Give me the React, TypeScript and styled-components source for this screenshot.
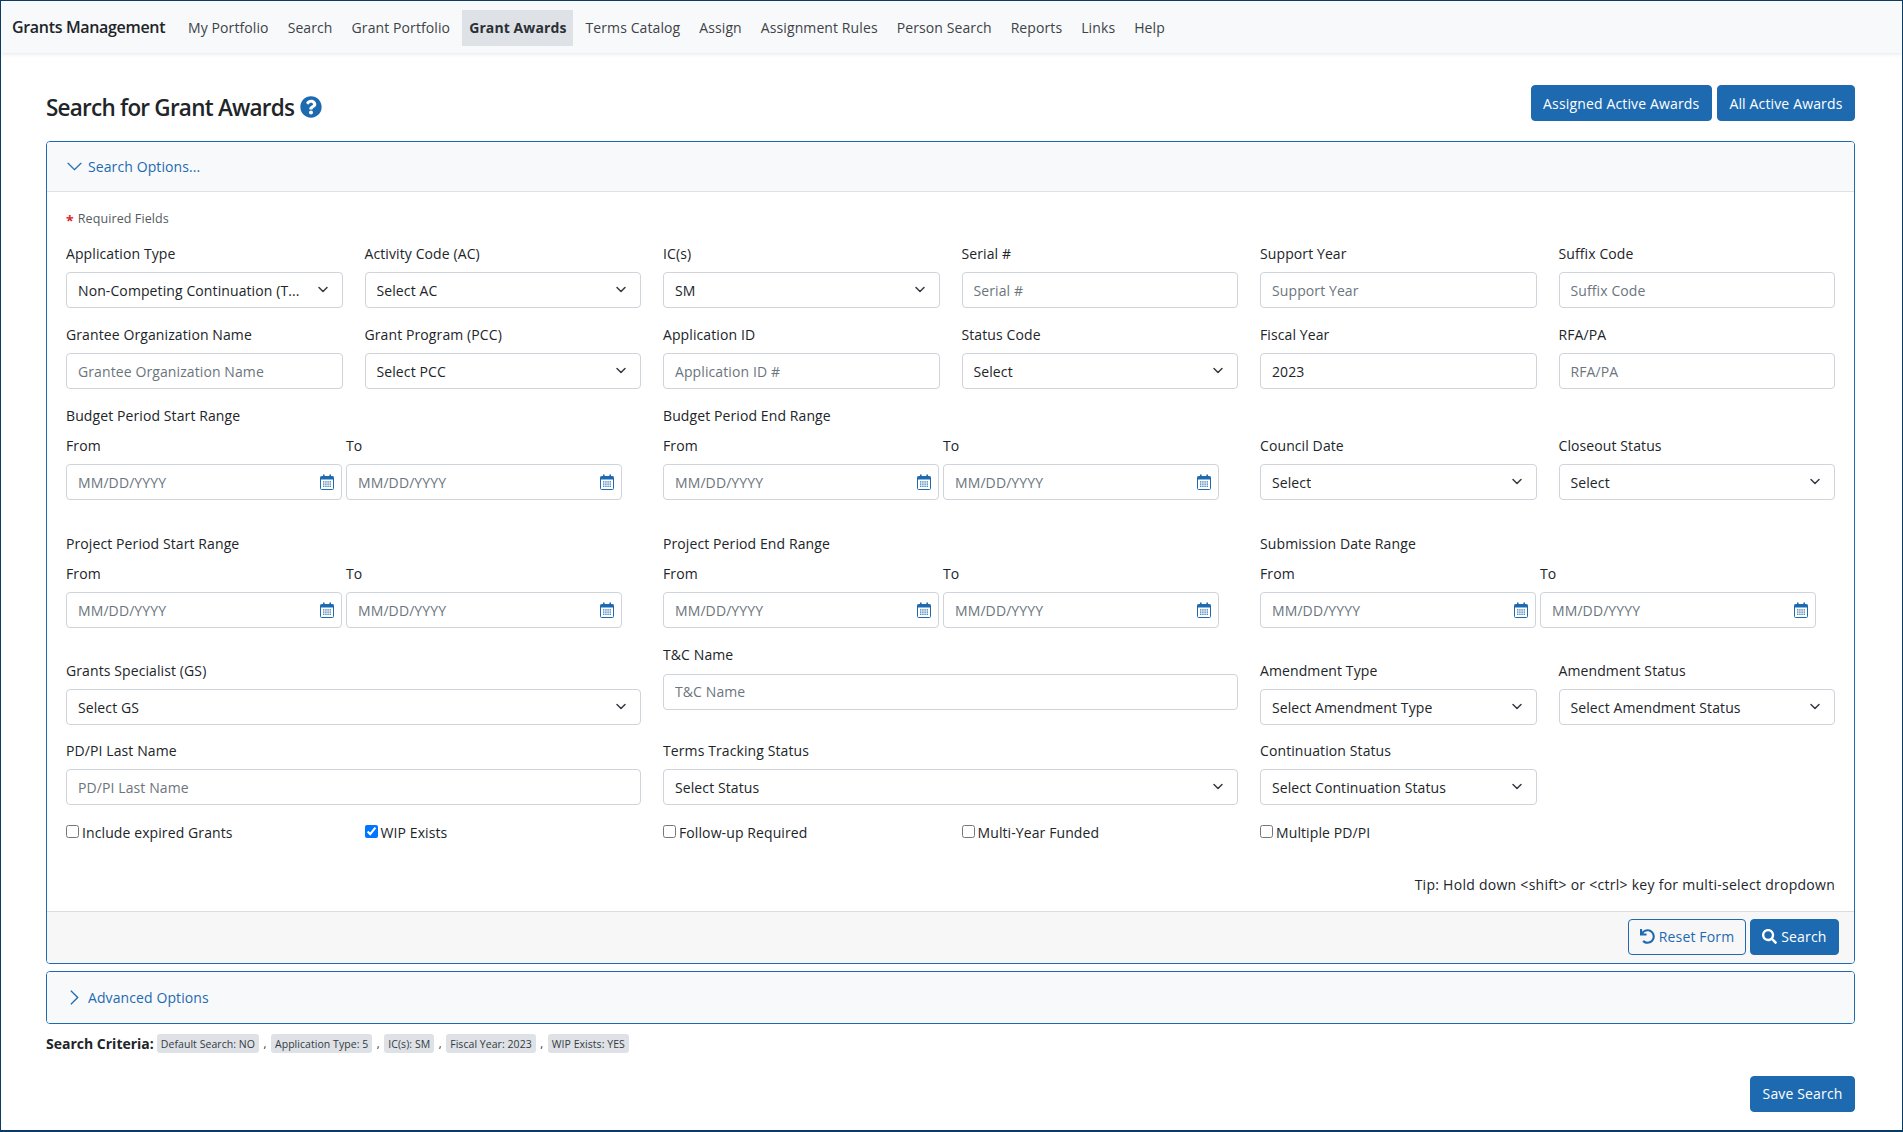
import { Fragment, ReactNode } from "react";
import styled, { createGlobalStyle } from "styled-components";
import { BsChevronDown, BsChevronRight } from "react-icons/bs";
import { FaQuestionCircle, FaSearch, FaUndo } from "react-icons/fa";

const PRIMARY = "#1e6ab0";
const FONT = `"Open Sans", "Noto Sans", sans-serif`;

const GlobalStyle = createGlobalStyle`
  html, body {
    margin: 0;
    padding: 0;
    background: #fff;
  }
  * {
    box-sizing: border-box;
  }
  body {
    font-family: ${FONT};
    font-size: 14px;
    color: #212529;
    letter-spacing: 0.1px;
  }
`;

const Frame = styled.div`
  width: 1903px;
  height: 1132px;
  border: 1px solid #0b3a63;
  border-bottom-width: 2px;
  overflow: hidden;
`;

const NavBar = styled.nav`
  height: 52px;
  background: #f8f9fa;
  box-shadow: 0 1px 4px rgba(0, 0, 0, 0.1);
  display: flex;
  align-items: flex-start;
  padding: 9px 0 0 11px;
`;
const Brand = styled.div`
  width: 169px;
  height: 36px;
  line-height: 35px;
  font-size: 16px;
  font-weight: 600;
  letter-spacing: -0.33px;
  color: #212529;
  white-space: nowrap;
`;
const NavItem = styled.a<{ $active?: boolean }>`
  height: 36px;
  line-height: 36px;
  padding: 0 7px;
  margin-right: 5px;
  white-space: nowrap;
  color: ${({ $active }) => ($active ? "#2b3035" : "#3d4349")};
  font-weight: ${({ $active }) => ($active ? 700 : 400)};
  background: ${({ $active }) => ($active ? "#dee2e6" : "transparent")};
`;

const Main = styled.main`
  padding: 32px 47px 0 45px;
`;
const TitleRow = styled.div`
  display: flex;
  align-items: center;
  height: 36px;
  margin-bottom: 20px;
`;
const Title = styled.h1`
  margin: 8px 0 0;
  font-size: 22.5px;
  font-weight: 600;
  letter-spacing: -0.77px;
  color: #212529;
  display: flex;
  align-items: center;
  gap: 6px;
  svg {
    color: ${PRIMARY};
    font-size: 22px;
  }
`;
const TitleActions = styled.div`
  margin-left: auto;
  display: flex;
  gap: 5px;
`;
const Button = styled.button<{ $outline?: boolean }>`
  height: 36px;
  padding: 0 ${({ $outline }) => ($outline ? "10.5px" : "11.5px")};
  border-radius: 4px;
  border: 1px solid ${PRIMARY};
  background: ${({ $outline }) => ($outline ? "transparent" : PRIMARY)};
  color: ${({ $outline }) => ($outline ? PRIMARY : "#fff")};
  font-family: ${FONT};
  font-size: 14px;
  letter-spacing: 0.15px;
  display: inline-flex;
  align-items: center;
  gap: 4px;
  white-space: nowrap;
`;

const Panel = styled.section`
  border: 1px solid ${PRIMARY};
  border-radius: 4px;
  overflow: hidden;
`;
const PanelHeader = styled.div<{ $open?: boolean }>`
  height: ${({ $open }) => ($open ? "50px" : "51px")};
  background: #f8f9fa;
  border-bottom: ${({ $open }) => ($open ? "1px solid #dee2e6" : "0")};
  display: flex;
  align-items: center;
  padding-left: 19px;
  color: ${PRIMARY};
  svg {
    font-size: 17px;
    margin-right: 5px;
    stroke-width: 0.3;
  }
`;
const PanelBody = styled.div`
  padding: 16px 19px 16px 19px;
`;
const Required = styled.div`
  height: 21px;
  line-height: 21px;
  font-size: 12.5px;
  color: #555b61;
  margin-bottom: 14.5px;
  display: flex;
  align-items: center;
  gap: 4px;
`;
const Star = styled.span`
  color: #e0222f;
  font-size: 14px;
  font-weight: 700;
  position: relative;
  top: 2px;
`;
const Row = styled.div<{ $top?: number }>`
  display: grid;
  grid-template-columns: repeat(6, minmax(0, 1fr));
  column-gap: 22px;
  align-items: start;
  margin-top: ${({ $top }) => $top ?? 0}px;
`;
const FieldBox = styled.div<{ $span?: number; $drop?: number }>`
  grid-column: span ${({ $span }) => $span ?? 1};
  padding-top: ${({ $drop }) => $drop ?? 0}px;
  min-width: 0;
`;
const Label = styled.label`
  display: block;
  height: 20px;
  line-height: 20px;
  margin-bottom: 8.5px;
  white-space: nowrap;
`;
const GroupTitle = styled.div`
  height: 21px;
  line-height: 21px;
  margin-bottom: 10px;
`;
const DatePair = styled.div`
  display: grid;
  grid-template-columns: 276px 276px;
  column-gap: 4px;
`;
const TextInput = styled.input`
  width: 100%;
  height: 36px;
  border: 1px solid #ced4da;
  border-radius: 4px;
  padding: 0 11px;
  background: #fff;
  font-family: ${FONT};
  font-size: 14px;
  letter-spacing: 0.1px;
  color: #212529;
  outline: none;
  &::placeholder {
    color: #6c757d;
    opacity: 1;
  }
`;
const SelectBox = styled.div`
  height: 36px;
  border: 1px solid #ced4da;
  border-radius: 4px;
  padding: 0 11px 0 11px;
  background: #fff;
  display: flex;
  align-items: center;
  justify-content: space-between;
  white-space: nowrap;
  span {
    overflow: hidden;
  }
  svg {
    flex: none;
  }
`;
const DateWrap = styled.div`
  position: relative;
`;
const CalendarSlot = styled.span`
  position: absolute;
  right: 8px;
  top: 10px;
  line-height: 0;
`;
const CheckLabel = styled.label`
  display: flex;
  align-items: flex-start;
  height: 21px;
  line-height: 21px;
  white-space: nowrap;
  gap: 3px;
  input {
    margin: 3px 0 0;
    width: 13px;
    height: 13px;
  }
`;
const Tip = styled.div`
  margin-top: 31px;
  height: 21px;
  line-height: 21px;
  text-align: right;
  letter-spacing: 0.27px;
`;
const PanelFooter = styled.div`
  height: 52px;
  background: #f7f7f7;
  border-top: 1px solid #dcdcdc;
  display: flex;
  justify-content: flex-end;
  align-items: flex-start;
  gap: 4px;
  padding: 7px 15px 0 0;
  svg {
    font-size: 15px;
  }
`;
const SecondPanel = styled(Panel)`
  margin-top: 7px;
`;
const CriteriaRow = styled.div`
  margin-top: 9px;
  height: 21px;
  display: flex;
  align-items: center;
`;
const CriteriaTitle = styled.strong`
  font-weight: 700;
  letter-spacing: 0px;
  margin-right: 3px;
`;
const Badge = styled.span`
  background: #dee2e6;
  border-radius: 3px;
  font-size: 10.5px;
  letter-spacing: 0.05px;
  color: #343a40;
  height: 19px;
  line-height: 20px;
  padding: 0 4px;
  white-space: nowrap;
`;
const Comma = styled.span`
  width: 12px;
  text-align: center;
  font-size: 11px;
`;
const BottomRow = styled.div`
  margin-top: 22px;
  display: flex;
  justify-content: flex-end;
`;

const Chevron = () => (
  <svg width="16" height="12" viewBox="0 0 16 12" fill="none">
    <path d="M4 3.5l4 4 4-4" stroke="#343a40" strokeWidth="1.5" strokeLinecap="round" strokeLinejoin="round" />
  </svg>
);

const CalendarIcon = () => (
  <svg width="14" height="16" viewBox="0 0 14 16">
    <rect x="0.5" y="2.5" width="13" height="13" rx="1" fill="#fff" stroke={PRIMARY} />
    <rect x="0.5" y="2.5" width="13" height="3" fill={PRIMARY} />
    <rect x="3" y="0.5" width="1.6" height="3.5" fill={PRIMARY} />
    <rect x="9.4" y="0.5" width="1.6" height="3.5" fill={PRIMARY} />
    {[7.2, 9.4, 11.6].map((y) =>
      [3, 5.2, 7.4, 9.6].map((x) => (
        <rect key={`${x}-${y}`} x={x} y={y} width="1.4" height="1.4" fill="#4d86bd" />
      ))
    )}
  </svg>
);

const Field = ({ label, span, drop, children }: { label: string; span?: number; drop?: number; children: ReactNode }) => (
  <FieldBox $span={span} $drop={drop}>
    <Label>{label}</Label>
    {children}
  </FieldBox>
);

const TextField = ({ label, placeholder, value, span, drop }: { label: string; placeholder?: string; value?: string; span?: number; drop?: number }) => (
  <Field label={label} span={span} drop={drop}>
    <TextInput placeholder={placeholder ?? label} defaultValue={value} />
  </Field>
);

const SelectField = ({ label, value, span, drop }: { label: string; value: string; span?: number; drop?: number }) => (
  <Field label={label} span={span} drop={drop}>
    <SelectBox>
      <span>{value}</span>
      <Chevron />
    </SelectBox>
  </Field>
);

const DateInput = ({ label }: { label: string }) => (
  <div>
    <Label>{label}</Label>
    <DateWrap>
      <TextInput placeholder="MM/DD/YYYY" />
      <CalendarSlot>
        <CalendarIcon />
      </CalendarSlot>
    </DateWrap>
  </div>
);

const DateRange = ({ title }: { title: string }) => (
  <FieldBox $span={2}>
    <GroupTitle>{title}</GroupTitle>
    <DatePair>
      <DateInput label="From" />
      <DateInput label="To" />
    </DatePair>
  </FieldBox>
);

const navLinks = ["My Portfolio", "Search", "Grant Portfolio", "Grant Awards", "Terms Catalog", "Assign", "Assignment Rules", "Person Search", "Reports", "Links", "Help"];
const criteria = ["Default Search: NO", "Application Type: 5", "IC(s): SM", "Fiscal Year: 2023", "WIP Exists: YES"];
const checks = [
  { label: "Include expired Grants" },
  { label: "WIP Exists", checked: true },
  { label: "Follow-up Required" },
  { label: "Multi-Year Funded" },
  { label: "Multiple PD/PI" },
];

export default function App() {
  return (
    <Frame>
      <GlobalStyle />
      <NavBar>
        <Brand>Grants Management</Brand>
        {navLinks.map((link) => (
          <NavItem key={link} $active={link === "Grant Awards"}>
            {link}
          </NavItem>
        ))}
      </NavBar>
      <Main>
        <TitleRow>
          <Title>
            Search for Grant Awards <FaQuestionCircle />
          </Title>
          <TitleActions>
            <Button>Assigned Active Awards</Button>
            <Button>All Active Awards</Button>
          </TitleActions>
        </TitleRow>
        <Panel>
          <PanelHeader $open>
            <BsChevronDown />
            Search Options...
          </PanelHeader>
          <PanelBody>
            <Required>
              <Star>*</Star>
              Required Fields
            </Required>
            <Row>
              <SelectField label="Application Type" value="Non-Competing Continuation (T..." />
              <SelectField label="Activity Code (AC)" value="Select AC" />
              <SelectField label="IC(s)" value="SM" />
              <TextField label="Serial #" />
              <TextField label="Support Year" />
              <TextField label="Suffix Code" />
            </Row>
            <Row $top={16.5}>
              <TextField label="Grantee Organization Name" />
              <SelectField label="Grant Program (PCC)" value="Select PCC" />
              <TextField label="Application ID" placeholder="Application ID #" />
              <SelectField label="Status Code" value="Select" />
              <TextField label="Fiscal Year" value="2023" />
              <TextField label="RFA/PA" />
            </Row>
            <Row $top={15.5}>
              <DateRange title="Budget Period Start Range" />
              <DateRange title="Budget Period End Range" />
              <SelectField label="Council Date" value="Select" drop={31} />
              <SelectField label="Closeout Status" value="Select" drop={31} />
            </Row>
            <Row $top={32.5}>
              <DateRange title="Project Period Start Range" />
              <DateRange title="Project Period End Range" />
              <DateRange title="Submission Date Range" />
            </Row>
            <Row $top={17}>
              <SelectField label="Grants Specialist (GS)" value="Select GS" span={2} drop={15.5} />
              <TextField label="T&C Name" span={2} />
              <SelectField label="Amendment Type" value="Select Amendment Type" drop={15.5} />
              <SelectField label="Amendment Status" value="Select Amendment Status" drop={15.5} />
            </Row>
            <Row $top={15.5}>
              <TextField label="PD/PI Last Name" span={2} />
              <SelectField label="Terms Tracking Status" value="Select Status" span={2} />
              <SelectField label="Continuation Status" value="Select Continuation Status" />
            </Row>
            <Row $top={16.5}>
              {checks.map((check) => (
                <CheckLabel key={check.label}>
                  <input type="checkbox" defaultChecked={check.checked} />
                  {check.label}
                </CheckLabel>
              ))}
            </Row>
            <Tip>{"Tip: Hold down <shift> or <ctrl> key for multi-select dropdown"}</Tip>
          </PanelBody>
          <PanelFooter>
            <Button $outline>
              <FaUndo />
              Reset Form
            </Button>
            <Button>
              <FaSearch />
              Search
            </Button>
          </PanelFooter>
        </Panel>
        <SecondPanel>
          <PanelHeader>
            <BsChevronRight />
            Advanced Options
          </PanelHeader>
        </SecondPanel>
        <CriteriaRow>
          <CriteriaTitle>Search Criteria:</CriteriaTitle>
          {criteria.map((item, index) => (
            <Fragment key={item}>
              {index > 0 && <Comma>,</Comma>}
              <Badge>{item}</Badge>
            </Fragment>
          ))}
        </CriteriaRow>
        <BottomRow>
          <Button>Save Search</Button>
        </BottomRow>
      </Main>
    </Frame>
  );
}
